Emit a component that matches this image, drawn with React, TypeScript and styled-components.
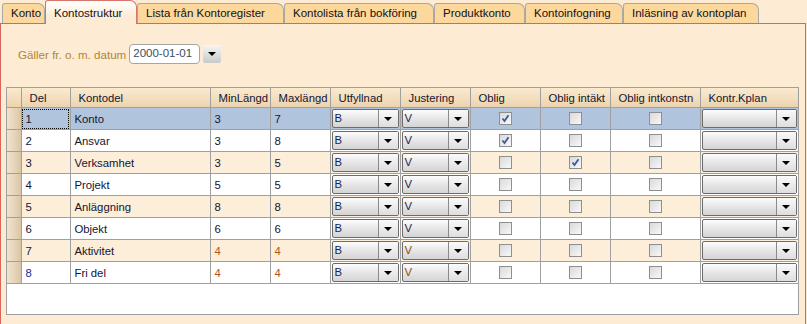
import React, { ReactElement } from 'react';
import styled, { createGlobalStyle, css } from 'styled-components';

const GlobalStyle = createGlobalStyle`
  html, body {
    margin: 0;
    padding: 0;
    background: #fdebd4;
  }
  body {
    font-family: "Liberation Sans", Arial, sans-serif;
    font-size: 11px;
    color: #1a1a2e;
  }
`;

const Screen = styled.div`
  width: 807px;
  height: 324px;
  display: flex;
  flex-direction: column;
  background: #fdebd4;
  overflow: hidden;
`;

const TabStrip = styled.div`
  display: flex;
  align-items: flex-end;
  height: 23px;
  padding-left: 2px;
  position: relative;
  z-index: 1;
`;

const Tab = styled.div<{ $active?: boolean; $w: number }>`
  box-sizing: border-box;
  width: ${(p) => p.$w}px;
  height: 20px;
  padding: 3px 0 0 8px;
  font-size: 11.5px;
  color: #101020;
  background: #fdd89c;
  border: 1px solid #a8a8a8;
  border-bottom: none;
  border-radius: 3px 7px 0 0;
  white-space: nowrap;
  ${(p) => p.$active && css`
    height: 24px;
    margin-bottom: -1px;
    padding-top: 6px;
    background: linear-gradient(#ffffff, #fdebd4 70%);
    border-color: #d7746a;
  `}
`;

const Panel = styled.div`
  flex: 1;
  border: 1px solid #d9655d;
  border-bottom: none;
  margin-right: 1px;
  padding: 0 6px 0 5px;
  display: flex;
  flex-direction: column;
`;

const DateRow = styled.div`
  display: flex;
  align-items: center;
  margin-top: 19px;
  padding-left: 12px;
  height: 22px;
`;

const DateLabel = styled.span`
  color: #b08638;
  font-size: 11.6px;
  margin-right: 3px;
`;

const DateBox = styled.div`
  box-sizing: border-box;
  width: 71px;
  height: 20px;
  border: 1px solid #a6a6a6;
  border-radius: 4px;
  background: #fff;
  color: #3e4d60;
  font-size: 11.5px;
  padding: 2px 0 0 3px;
`;

const DropButton = styled.div`
  box-sizing: border-box;
  width: 18px;
  height: 18px;
  margin-left: 3px;
  background: linear-gradient(#f6f6f6, #c9c9c9);
  border-radius: 2px;
  display: flex;
  align-items: center;
  justify-content: center;
`;

const Arrow = styled.span`
  width: 0;
  height: 0;
  border-left: 4px solid transparent;
  border-right: 4px solid transparent;
  border-top: 4px solid #000;
`;

const GridBox = styled.div`
  box-sizing: border-box;
  margin-top: 22px;
  width: 793px;
  height: 228px;
  border: 1px solid #a0a0a0;
  background: #fff;
  overflow: hidden;
`;

const Table = styled.table`
  width: 791px;
  border-collapse: collapse;
  border-spacing: 0;
  table-layout: fixed;
  font-size: 11.3px;
`;

const Th = styled.th`
  height: 19px;
  padding: 0 0 0 8px;
  text-align: left;
  font-weight: normal;
  color: #151530;
  background: linear-gradient(#faeacf, #ecd3ae);
  border-right: 1px solid #a0a0a0;
  border-bottom: 1px solid #a0a0a0;
  white-space: nowrap;
  overflow: hidden;
`;

const RowHead = styled.td`
  padding: 0;
  height: 21px;
  background: linear-gradient(90deg, #f1e3cd, #d9c6a6);
  border-right: 1px solid #a0a0a0;
  border-bottom: 1px solid #a0a0a0;
`;

const Tr = styled.tr<{ $bg: string }>`
  background: ${(p) => p.$bg};
`;

const Td = styled.td<{ $tone?: string; $focus?: boolean }>`
  height: 21px;
  padding: 0 0 0 4px;
  color: ${(p) => p.$tone ?? '#141432'};
  border-right: 1px solid #a0a0a0;
  border-bottom: 1px solid #a0a0a0;
  white-space: nowrap;
  overflow: hidden;
  ${(p) => p.$focus && css`
    outline: 1px dotted #000;
    outline-offset: -2px;
  `}
`;

const ComboCell = styled.td`
  height: 21px;
  padding: 0 1px;
  border-right: 1px solid #a0a0a0;
  border-bottom: 1px solid #a0a0a0;
`;

const Combo = styled.div`
  box-sizing: border-box;
  height: 19px;
  margin: 1px 0;
  display: flex;
  border: 1px solid #6c6c6c;
  border-radius: 2px;
  background: linear-gradient(#fdfdfd, #e6e6e6 50%, #d4d4d4);
`;

const ComboText = styled.span<{ $tone: string }>`
  flex: 1;
  padding: 2px 0 0 2px;
  color: ${(p) => p.$tone};
`;

const ComboBtn = styled.span`
  width: 19px;
  border-left: 1px solid #8a8a8a;
  display: flex;
  align-items: center;
  justify-content: center;
  background: linear-gradient(#fafafa, #dedede);
`;

const CheckCell = styled.td`
  height: 21px;
  padding: 0;
  text-align: center;
  border-right: 1px solid #a0a0a0;
  border-bottom: 1px solid #a0a0a0;
`;

const Box = styled.span`
  box-sizing: border-box;
  display: inline-flex;
  align-items: center;
  justify-content: center;
  vertical-align: middle;
  width: 13px;
  height: 13px;
  border: 1px solid #8e8f8f;
  background: linear-gradient(135deg, #d9d9d9, #f8f8f8);
`;

const Check = ({ on }: { on: boolean }): ReactElement => (
  <Box>
    {on && (
      <svg width="9" height="9" viewBox="0 0 9 9">
        <path d="M1.5 4.5 L3.5 7 L7.5 1.2" fill="none" stroke="#3d57a0" strokeWidth="1.8" />
      </svg>
    )}
  </Box>
);

const ComboField = ({ text, tone = '#1e1e50' }: { text: string; tone?: string }): ReactElement => (
  <ComboCell>
    <Combo>
      <ComboText $tone={tone}>{text}</ComboText>
      <ComboBtn><Arrow /></ComboBtn>
    </Combo>
  </ComboCell>
);

const columns: [string, number][] = [
  ['', 14], ['Del', 49], ['Kontodel', 140], ['MinLängd', 60], ['Maxlängd', 60], ['Utfyllnad', 70],
  ['Justering', 70], ['Oblig', 70], ['Oblig intäkt', 70], ['Oblig intkonstn', 90], ['Kontr.Kplan', 98],
];

const rows = [
  { del: '1', name: 'Konto', min: '3', max: '7', oblig: true, intakt: false },
  { del: '2', name: 'Ansvar', min: '3', max: '8', oblig: true, intakt: false },
  { del: '3', name: 'Verksamhet', min: '3', max: '5', oblig: false, intakt: true },
  { del: '4', name: 'Projekt', min: '5', max: '5', oblig: false, intakt: false },
  { del: '5', name: 'Anläggning', min: '8', max: '8', oblig: false, intakt: false },
  { del: '6', name: 'Objekt', min: '6', max: '6', oblig: false, intakt: false },
  { del: '7', name: 'Aktivitet', min: '4', max: '4', oblig: false, intakt: false },
  { del: '8', name: 'Fri del', min: '4', max: '4', oblig: false, intakt: false },
];

const tabs: [string, number][] = [
  ['Konto', 43], ['Kontostruktur', 92], ['Lista från Kontoregister', 147],
  ['Kontolista från bokföring', 150], ['Produktkonto', 91], ['Kontoinfogning', 98],
  ['Inläsning av kontoplan', 136],
];

const rowBg = (i: number): string => {
  if (i === 0) return '#b0c4de';
  return i % 2 === 0 ? '#fdeed9' : '#ffffff';
};

const App = (): ReactElement => (
  <Screen>
    <GlobalStyle />
    <TabStrip>
      {tabs.map(([label, w]) => (
        <Tab key={label} $w={w} $active={label === 'Kontostruktur'}>{label}</Tab>
      ))}
    </TabStrip>
    <Panel>
      <DateRow>
        <DateLabel>Gäller fr. o. m. datum</DateLabel>
        <DateBox>2000-01-01</DateBox>
        <DropButton><Arrow /></DropButton>
      </DateRow>
      <GridBox>
        <Table>
          <colgroup>
            {columns.map(([label, w]) => <col key={label || 'rh'} style={{ width: w }} />)}
          </colgroup>
          <thead>
            <tr>
              {columns.map(([label]) => <Th key={label || 'rh'}>{label}</Th>)}
            </tr>
          </thead>
          <tbody>
            {rows.map((r, i) => {
              const late = i >= 6;
              return (
                <Tr key={r.del} $bg={rowBg(i)}>
                  <RowHead />
                  <Td $focus={i === 0} $tone={i === 7 ? '#24249a' : undefined}>{r.del}</Td>
                  <Td>{r.name}</Td>
                  <Td $tone={late ? '#b3540f' : undefined}>{r.min}</Td>
                  <Td $tone={late ? '#b3540f' : undefined}>{r.max}</Td>
                  <ComboField text="B" />
                  <ComboField text="V" tone={late ? '#8a4a1a' : '#1e1e50'} />
                  <CheckCell><Check on={r.oblig} /></CheckCell>
                  <CheckCell><Check on={r.intakt} /></CheckCell>
                  <CheckCell><Check on={false} /></CheckCell>
                  <ComboField text="" />
                </Tr>
              );
            })}
          </tbody>
        </Table>
      </GridBox>
    </Panel>
  </Screen>
);

export default App;
